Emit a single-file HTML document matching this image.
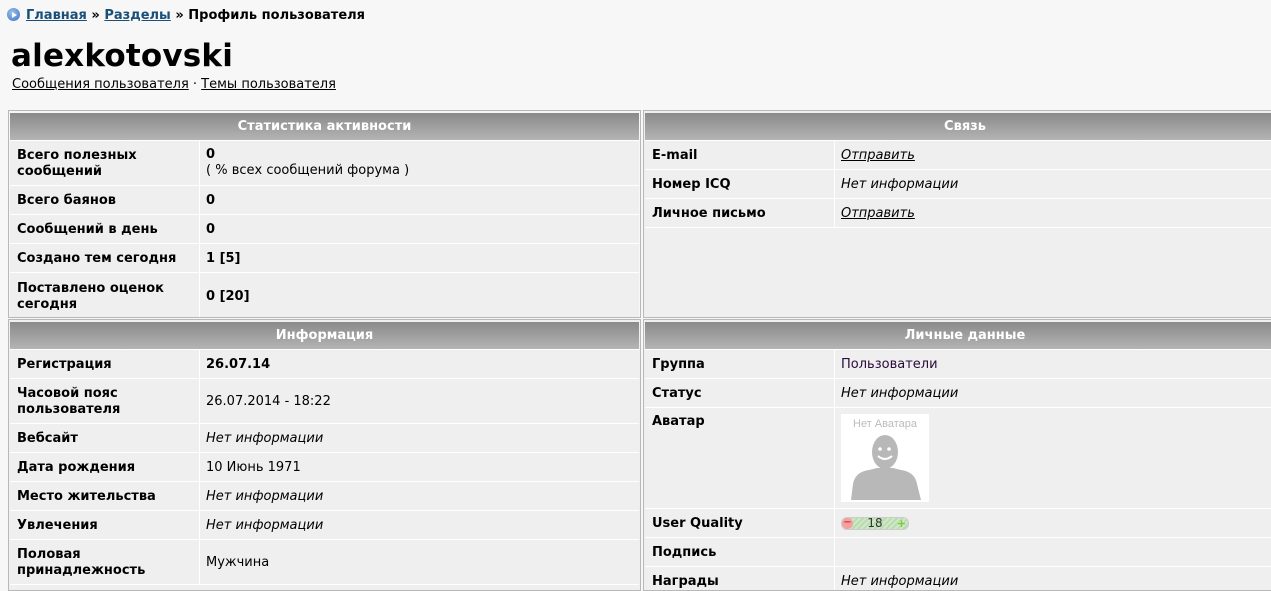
<!DOCTYPE html>
<html><head><meta charset="utf-8"><style>
html{overflow:hidden;height:591px}
body{margin:0;background:#f7f7f7;font-family:"DejaVu Sans","Liberation Sans",sans-serif;font-size:13px;color:#000;width:1271px;height:591px;overflow:hidden;position:relative}
.a{position:absolute}
.crumb{left:7px;top:8px;font-weight:bold;font-size:13px}
.crumb a{color:#1a4f7a;text-decoration:underline}
.ico{display:inline-block;width:13px;height:13px;border-radius:50%;background:radial-gradient(circle at 40% 35%,#9bc0ee,#3c6fc4);vertical-align:-2px;margin-right:6px;position:relative}
.ico:after{content:"";position:absolute;left:5px;top:3.5px;border-left:5px solid #fff;border-top:3px solid transparent;border-bottom:3px solid transparent}
h1{position:absolute;left:11px;top:38px;margin:0;font-size:31px;font-weight:bold;letter-spacing:0.2px}
.sub{left:12px;top:77px;font-size:13px}
.sub a{color:#000;text-decoration:underline}
.panel{position:absolute;border:1px solid #b8b8b8;padding:1px;background:#f7f7f7;overflow:hidden}
.hd{height:27px;margin-top:1px;background:linear-gradient(#8a8a8a,#b4b4b4);color:#fff;font-weight:bold;text-align:center;line-height:28px;font-size:13px}
.row{display:flex;background:#efefef;border-top:1px solid #fff}
.l{width:182px;padding-left:7px;padding-top:1px;font-weight:bold;border-right:1px solid #fff;display:flex;align-items:center;line-height:16px}
.v{padding-left:6px;padding-top:1px;display:flex;align-items:center;line-height:16px}
.top{align-items:flex-start;padding-top:6px}
i{font-style:italic}
.u{text-decoration:underline}
</style></head><body>
<div class="a crumb"><span class="ico"></span><a>Главная</a> » <a>Разделы</a> » Профиль пользователя</div>
<h1>alexkotovski</h1>
<div class="a sub"><a>Сообщения пользователя</a> · <a>Темы пользователя</a></div>

<div class="panel" style="left:8px;top:110px;width:629px;height:204px">
<div class="hd">Статистика активности</div>
<div class="row" style="height:44px"><div class="l">Всего полезных<br>сообщений</div><div class="v" style="display:block;padding-top:6px"><b>0</b><br>( % всех сообщений форума )</div></div>
<div class="row" style="height:28px"><div class="l">Всего баянов</div><div class="v"><b>0</b></div></div>
<div class="row" style="height:28px"><div class="l">Сообщений в день</div><div class="v"><b>0</b></div></div>
<div class="row" style="height:28px"><div class="l">Создано тем сегодня</div><div class="v"><b>1 [5]</b></div></div>
<div class="row" style="height:46px"><div class="l">Поставлено оценок<br>сегодня</div><div class="v"><b>0 [20]</b></div></div>
</div>

<div class="panel" style="left:643px;top:110px;width:640px;height:204px;background:#efefef">
<div class="hd">Связь</div>
<div class="row" style="height:28px"><div class="l">E-mail</div><div class="v"><i class="u">Отправить</i></div></div>
<div class="row" style="height:28px"><div class="l">Номер ICQ</div><div class="v"><i>Нет информации</i></div></div>
<div class="row" style="height:28px"><div class="l">Личное письмо</div><div class="v"><i class="u">Отправить</i></div></div>
<div class="row" style="height:89px"></div>
</div>

<div class="panel" style="left:8px;top:319px;width:629px;height:268px;background:#efefef">
<div class="hd">Информация</div>
<div class="row" style="height:28px"><div class="l">Регистрация</div><div class="v"><b>26.07.14</b></div></div>
<div class="row" style="height:44px"><div class="l">Часовой пояс<br>пользователя</div><div class="v">26.07.2014 - 18:22</div></div>
<div class="row" style="height:28px"><div class="l">Вебсайт</div><div class="v"><i>Нет информации</i></div></div>
<div class="row" style="height:28px"><div class="l">Дата рождения</div><div class="v">10 Июнь 1971</div></div>
<div class="row" style="height:28px"><div class="l">Место жительства</div><div class="v"><i>Нет информации</i></div></div>
<div class="row" style="height:28px"><div class="l">Увлечения</div><div class="v"><i>Нет информации</i></div></div>
<div class="row" style="height:44px"><div class="l">Половая<br>принадлежность</div><div class="v">Мужчина</div></div>
<div class="row" style="height:30px"></div>
</div>

<div class="panel" style="left:643px;top:319px;width:640px;height:268px;background:#efefef">
<div class="hd">Личные данные</div>
<div class="row" style="height:28px"><div class="l">Группа</div><div class="v" style="color:#2a0a3a">Пользователи</div></div>
<div class="row" style="height:28px"><div class="l">Статус</div><div class="v"><i>Нет информации</i></div></div>
<div class="row" style="height:100px"><div class="l top">Аватар</div><div class="v top" style="padding-top:6px">
<svg width="88" height="88" viewBox="0 0 88 88"><rect width="88" height="88" fill="#fff"/><text x="44" y="13" font-size="11" fill="#bbb" text-anchor="middle" font-family="Liberation Sans,sans-serif">Нет Аватара</text><ellipse cx="44" cy="38" rx="13" ry="17" fill="#b8b8b8"/><path d="M10 86 L12 70 Q14 58 28 56 L36 54 L52 54 L60 56 Q74 58 76 70 L80 86 Z" fill="#b8b8b8"/><circle cx="39" cy="35" r="1.8" fill="#fff"/><circle cx="48" cy="35" r="1.8" fill="#fff"/><path d="M37 42 Q44 48 51 42" stroke="#fff" stroke-width="2" fill="none"/></svg>
</div></div>
<div class="row" style="height:28px"><div class="l">User Quality</div><div class="v"><span style="display:inline-block;width:66px;height:11px;border-radius:6px;border:1px solid #ccc;background:repeating-linear-gradient(135deg,#cfe8c8 0 2px,#b8dcb0 2px 4px);position:relative;font-size:12px;line-height:11px;text-align:center;color:#333"><span style="position:absolute;left:0;top:0;width:11px;height:11px;border-radius:50%;background:#f4a0a0;color:#d00;font-size:10px;line-height:10px">−</span>18<span style="position:absolute;right:1px;top:0;width:11px;height:11px;color:#7c3;font-size:11px;line-height:11px;font-weight:bold">+</span></span></div></div>
<div class="row" style="height:28px"><div class="l">Подпись</div><div class="v"></div></div>
<div class="row" style="height:30px"><div class="l" style="align-items:flex-start;padding-top:7px">Награды</div><div class="v" style="align-items:flex-start;padding-top:7px"><i>Нет информации</i></div></div>
</div>
</body></html>
